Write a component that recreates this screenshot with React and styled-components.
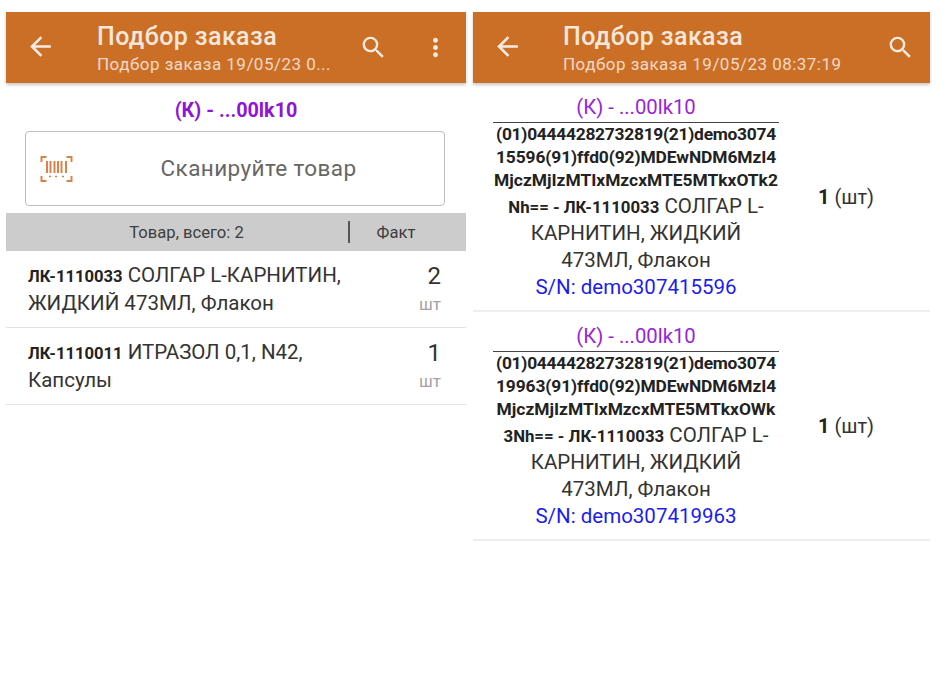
import styled, { createGlobalStyle } from 'styled-components';

const GlobalStyle = createGlobalStyle`
    html, body {
        margin: 0;
        padding: 0;
        background: #fff;
    }
    body {
        font-family: Roboto, "Noto Sans", sans-serif;
        color: #333;
    }
`;

const Page = styled.div`
    display: flex;
    gap: 7px;
    width: 946px;
    height: 696px;
    padding: 12px 0 0 6px;
    box-sizing: border-box;
    overflow: hidden;
`;

const Screen = styled.div`
    display: flex;
    flex-direction: column;
    width: ${(p) => p.$width}px;
`;

const Header = styled.header`
    display: flex;
    align-items: center;
    height: 71px;
    flex-shrink: 0;
    background: #cc6f26;
    box-shadow: 0 2px 3px rgba(0, 0, 0, 0.22);
    color: #fff;
`;

const BackButton = styled.div`
    display: flex;
    width: ${(p) => p.$width}px;
    flex-shrink: 0;
    padding: 0 0 2px 19px;
    box-sizing: border-box;
`;

const HeaderText = styled.div`
    flex: 1;
    min-width: 0;
`;

const HeaderTitle = styled.div`
    font-size: 25px;
    line-height: 30px;
    font-weight: 500;
    letter-spacing: 0.4px;
    color: #f4e7dc;
`;

const HeaderSubtitle = styled.div`
    margin-top: 2px;
    font-size: 17px;
    line-height: 20px;
    letter-spacing: 0.47px;
    color: #f0d9c6;
    white-space: nowrap;
`;

const HeaderIcon = styled.div`
    display: flex;
    justify-content: center;
    width: ${(p) => p.$width}px;
    flex-shrink: 0;
`;

const TaskLabel = styled.div`
    margin-top: 16px;
    text-align: center;
    font-size: 19.8px;
    line-height: 24px;
    font-weight: 700;
    color: #9013d8;
`;

const ScanBox = styled.div`
    display: flex;
    align-items: center;
    height: 75px;
    margin: 8px 21px 0 19px;
    padding-left: 14px;
    box-sizing: border-box;
    border: 1.5px solid #bdbdbd;
    border-radius: 4px;
`;

const ScanText = styled.div`
    flex: 1;
    padding-bottom: 2px;
    text-align: center;
    font-size: 22.5px;
    letter-spacing: 0.4px;
    color: #666;
`;

const TableHead = styled.div`
    display: flex;
    align-items: center;
    height: 38px;
    margin-top: 7px;
    background: #cccccc;
    font-size: 16.6px;
    color: #3d3d3d;
`;

const HeadName = styled.div`
    flex: 1;
    padding-left: 19px;
    text-align: center;
`;

const HeadDivider = styled.div`
    width: 2px;
    height: 22px;
    background: #555;
`;

const HeadFact = styled.div`
    width: 92px;
    margin-right: 24px;
    text-align: center;
`;

const ProductRow = styled.div`
    display: flex;
    height: 77px;
    padding: 11px 25px 0 22px;
    box-sizing: border-box;
    border-bottom: 1px solid #e2e2e2;
`;

const ProductName = styled.div`
    flex: 0 0 330px;
    font-size: 20.5px;
    line-height: 26px;
    color: #333;
`;

const Code = styled.b`
    font-size: 16.6px;
    font-weight: 700;
    color: #222;
`;

const ProductQty = styled.div`
    display: flex;
    flex: 1;
    flex-direction: column;
    align-items: flex-end;
    padding-top: 1px;
`;

const QtyValue = styled.div`
    font-size: 24px;
    line-height: 26px;
    color: #333;
`;

const QtyUnit = styled.div`
    margin-top: 6px;
    font-size: 17px;
    line-height: 18px;
    color: #a3a3a3;
`;

const MarkRow = styled.div`
    display: flex;
    align-items: center;
    height: 229px;
    padding-top: 2px;
    border-bottom: 2px solid #eeeeee;
    box-sizing: border-box;
`;

const MarkBody = styled.div`
    width: 286px;
    margin-left: 20px;
    flex-shrink: 0;
    text-align: center;
    font-size: 20.5px;
    line-height: 26.7px;
    color: #333;
`;

const MarkTask = styled.div`
    font-size: 20.3px;
    line-height: 24px;
    color: #9a22dc;
    padding-bottom: 3px;
    border-bottom: 1.5px solid #444;
`;

const CodeLine = styled.div`
    font-size: 17.4px;
    line-height: 23px;
    font-weight: 700;
    letter-spacing: ${(p) => p.$spacing}px;
    color: #222;
    white-space: nowrap;
`;

const TailLine = styled.div`
    margin-top: 1px;
`;

const MarkCode = styled.b`
    font-size: 16.8px;
    font-weight: 700;
    color: #222;
`;

const Serial = styled.div`
    color: #1c1cf0;
`;

const MarkQty = styled.div`
    flex: 1;
    padding: 0 56px 2px 0;
    text-align: right;
    font-size: 20px;
    color: #333;
    b {
        color: #222;
    }
`;

function BackIcon() {
    return (
        <svg width="31" height="31" viewBox="0 0 24 24" fill="#f6ebe2">
            <path d="M20 11H7.83l5.59-5.59L12 4l-8 8 8 8 1.41-1.41L7.83 13H20v-2z" />
        </svg>
    );
}

function SearchIcon() {
    return (
        <svg width="29" height="29" viewBox="0 0 24 24" fill="#f6ebe2">
            <path d="M15.5 14h-.79l-.28-.27A6.47 6.47 0 0 0 16 9.5 6.5 6.5 0 1 0 9.5 16c1.61 0 3.09-.59 4.23-1.57l.27.28v.79l5 4.99L20.49 19l-4.99-5zm-6 0C7.01 14 5 11.99 5 9.5S7.01 5 9.5 5 14 7.01 14 9.5 11.99 14 9.5 14z" />
        </svg>
    );
}

function MoreIcon() {
    return (
        <svg width="29" height="29" viewBox="0 0 24 24" fill="#f6ebe2">
            <path d="M12 8c1.1 0 2-.9 2-2s-.9-2-2-2-2 .9-2 2 .9 2 2 2zm0 2c-1.1 0-2 .9-2 2s.9 2 2 2 2-.9 2-2-.9-2-2-2zm0 6c-1.1 0-2 .9-2 2s.9 2 2 2 2-.9 2-2-.9-2-2-2z" />
        </svg>
    );
}

function BarcodeIcon() {
    return (
        <svg width="33" height="28" viewBox="0 0 33 28" fill="none" stroke="#d9834a">
            <path d="M1.5 7V2h5M26.5 2h5v5M1.5 21v5h5M26.5 26h5v-5" strokeWidth="2" />
            <path d="M7 6v12M10.5 6v12M14.5 6v12M18 6v12M21.5 6v12M26 6v12" strokeWidth="2" />
            <path d="M9 21.5h2M15 21.5h2M22 21.5h2" strokeWidth="1.5" />
        </svg>
    );
}

const products = [
    { code: 'ЛК-1110033', name: 'СОЛГАР L-КАРНИТИН, ЖИДКИЙ 473МЛ, Флакон', qty: 2 },
    { code: 'ЛК-1110011', name: 'ИТРАЗОЛ 0,1, N42, Капсулы', qty: 1 },
];

const marks = [
    {
        lines: [
            { text: '(01)04444282732819(21)demo3074', spacing: -0.27 },
            { text: '15596(91)ffd0(92)MDEwNDM6MzI4', spacing: -0.1 },
            { text: 'MjczMjIzMTIxMzcxMTE5MTkxOTk2', spacing: 0 },
        ],
        tail: 'Nh== - ЛК-1110033',
        serial: 'demo307415596',
    },
    {
        lines: [
            { text: '(01)04444282732819(21)demo3074', spacing: -0.27 },
            { text: '19963(91)ffd0(92)MDEwNDM6MzI4', spacing: -0.1 },
            { text: 'MjczMjIzMTIxMzcxMTE5MTkxOWk', spacing: 0 },
        ],
        tail: '3Nh== - ЛК-1110033',
        serial: 'demo307419963',
    },
];

export default function App() {
    return (
        <Page>
            <GlobalStyle />
            <Screen $width={460}>
                <Header>
                    <BackButton $width={91}><BackIcon /></BackButton>
                    <HeaderText>
                        <HeaderTitle>Подбор заказа</HeaderTitle>
                        <HeaderSubtitle>Подбор заказа 19/05/23 0...</HeaderSubtitle>
                    </HeaderText>
                    <HeaderIcon $width={62}><SearchIcon /></HeaderIcon>
                    <HeaderIcon $width={62}><MoreIcon /></HeaderIcon>
                </Header>
                <TaskLabel>(К) - ...00lk10</TaskLabel>
                <ScanBox>
                    <BarcodeIcon />
                    <ScanText>Сканируйте товар</ScanText>
                </ScanBox>
                <TableHead>
                    <HeadName>Товар, всего: 2</HeadName>
                    <HeadDivider />
                    <HeadFact>Факт</HeadFact>
                </TableHead>
                {products.map((item) => (
                    <ProductRow key={item.code}>
                        <ProductName>
                            <Code>{item.code}</Code> {item.name}
                        </ProductName>
                        <ProductQty>
                            <QtyValue>{item.qty}</QtyValue>
                            <QtyUnit>шт</QtyUnit>
                        </ProductQty>
                    </ProductRow>
                ))}
            </Screen>
            <Screen $width={457}>
                <Header>
                    <BackButton $width={90}><BackIcon /></BackButton>
                    <HeaderText>
                        <HeaderTitle>Подбор заказа</HeaderTitle>
                        <HeaderSubtitle>Подбор заказа 19/05/23 08:37:19</HeaderSubtitle>
                    </HeaderText>
                    <HeaderIcon $width={60}><SearchIcon /></HeaderIcon>
                </Header>
                {marks.map((mark) => (
                    <MarkRow key={mark.serial}>
                        <MarkBody>
                            <MarkTask>(К) - ...00lk10</MarkTask>
                            {mark.lines.map((line) => (
                                <CodeLine key={line.text} $spacing={line.spacing}>{line.text}</CodeLine>
                            ))}
                            <TailLine><MarkCode>{mark.tail}</MarkCode> СОЛГАР L-</TailLine>
                            <div>КАРНИТИН, ЖИДКИЙ</div>
                            <div>473МЛ, Флакон</div>
                            <Serial>S/N: {mark.serial}</Serial>
                        </MarkBody>
                        <MarkQty><b>1</b> (шт)</MarkQty>
                    </MarkRow>
                ))}
            </Screen>
        </Page>
    );
}
